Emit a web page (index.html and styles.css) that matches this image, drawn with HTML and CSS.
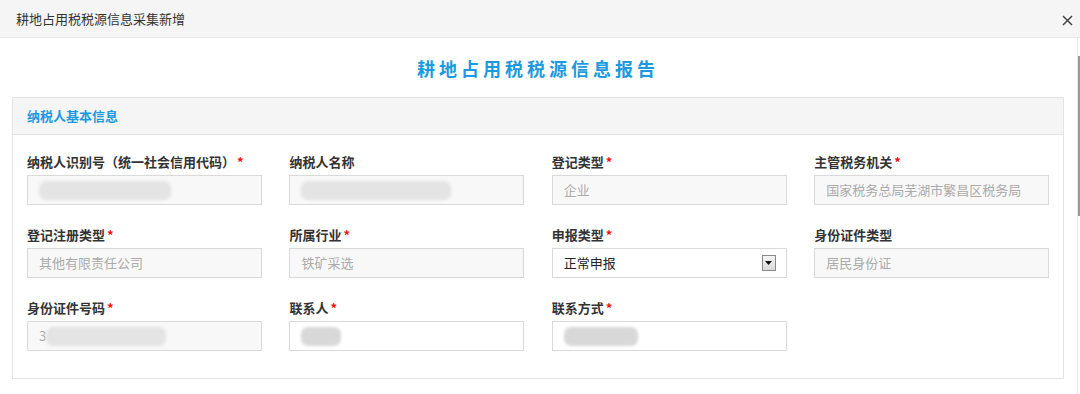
FILE: index.html
```html
<!DOCTYPE html>
<html lang="zh-CN">
<head>
  <meta charset="UTF-8" />
  <title>耕地占用税税源信息采集新增</title>
  <link rel="stylesheet" href="styles.css">
</head>
<body>

  <div class="dialog-head">
    <span class="dialog-title">耕地占用税税源信息采集新增</span>
    <span class="dialog-close">
      <svg width="11" height="11" viewBox="0 0 11 11"><path d="M1 1 L10 10 M10 1 L1 10" stroke="#444" stroke-width="1.5" fill="none"/></svg>
    </span>
  </div>

  <div class="dialog-body">
    <div class="content">
      <h2 class="report-title">耕地占用税税源信息报告</h2>

      <div class="panel">
        <div class="panel-head">纳税人基本信息</div>
        <div class="panel-body">

          <!-- row 1 -->
          <div class="form-group">
            <label>纳税人识别号（统一社会信用代码）<i class="req">*</i></label>
            <div class="field readonly"><span class="blob" style="width:132px"></span></div>
          </div>
          <div class="form-group">
            <label>纳税人名称</label>
            <div class="field readonly"><span class="blob" style="width:150px"></span></div>
          </div>
          <div class="form-group">
            <label>登记类型<i class="req">*</i></label>
            <div class="field readonly">企业</div>
          </div>
          <div class="form-group">
            <label>主管税务机关<i class="req">*</i></label>
            <div class="field readonly">国家税务总局芜湖市繁昌区税务局</div>
          </div>

          <!-- row 2 -->
          <div class="form-group">
            <label>登记注册类型<i class="req">*</i></label>
            <div class="field readonly">其他有限责任公司</div>
          </div>
          <div class="form-group">
            <label>所属行业<i class="req">*</i></label>
            <div class="field readonly">铁矿采选</div>
          </div>
          <div class="form-group">
            <label>申报类型<i class="req">*</i></label>
            <div class="field select">
              <span class="value">正常申报</span>
              <span class="arrow"><svg width="7" height="4" viewBox="0 0 7 4"><path d="M0 0 H7 L3.5 4 Z" fill="#111"/></svg></span>
            </div>
          </div>
          <div class="form-group">
            <label>身份证件类型</label>
            <div class="field readonly">居民身份证</div>
          </div>

          <!-- row 3 -->
          <div class="form-group">
            <label>身份证件号码<i class="req">*</i></label>
            <div class="field readonly">3<span class="blob" style="width:120px"></span></div>
          </div>
          <div class="form-group">
            <label>联系人<i class="req">*</i></label>
            <div class="field"><span class="blob dark" style="width:40px"></span></div>
          </div>
          <div class="form-group">
            <label>联系方式<i class="req">*</i></label>
            <div class="field"><span class="blob dark" style="width:74px"></span></div>
          </div>

        </div>
      </div>
    </div>
    <div class="scrollbar"><div class="thumb"></div></div>
  </div>

</body>
</html>
```

FILE: styles.css
```css
:root {
  --blue: #1b9ae0;
  --border: #d9d9d9;
  --text: #333333;
}

body {
  margin: 0;
  padding: 0;
  font-family: "Noto Sans CJK SC", "Noto Sans", sans-serif;
  color: var(--text);
  background: #ffffff;
}

.dialog-head {
  height: 37px;
  background: #f5f5f5;
  border-bottom: 1px solid #e8e8e8;
  display: flex;
  align-items: center;
  justify-content: space-between;
  padding: 0 7px 0 16px;
}

.dialog-title {
  font-size: 13px;
  color: #333;
}

.dialog-close {
  display: flex;
  margin-top: 3px;
}

.dialog-body {
  display: flex;
  height: 356px;
}

.content {
  flex: 1;
  padding: 0 13px 0 12px;
  border-right: 1px solid #e6e6e6;
}

.scrollbar {
  width: 2px;
  padding-top: 18px;
}

.scrollbar .thumb {
  height: 160px;
  background: #9a9a9a;
}

.report-title {
  margin: 0;
  padding: 20px 0 19px;
  text-align: center;
  font-size: 18px;
  line-height: 20px;
  font-weight: bold;
  letter-spacing: 4px;
  color: var(--blue);
}

.panel {
  border: 1px solid #e3e3e3;
}

.panel-head {
  height: 36px;
  line-height: 36px;
  padding-left: 14px;
  background: #f5f5f5;
  border-bottom: 1px solid #e3e3e3;
  font-size: 13px;
  font-weight: bold;
  color: var(--blue);
}

.panel-body {
  display: grid;
  grid-template-columns: repeat(4, 235px);
  column-gap: 27.4px;
  row-gap: 21px;
  padding: 18px 0 27px 14px;
}

.form-group label {
  display: block;
  font-size: 13px;
  line-height: 18px;
  font-weight: bold;
  color: #333;
  margin-bottom: 4px;
  white-space: nowrap;
}

.req {
  font-style: normal;
  color: #f01010;
  margin-left: 2px;
}

.field {
  box-sizing: border-box;
  height: 30px;
  border: 1px solid var(--border);
  background: #ffffff;
  padding-left: 11px;
  font-size: 13px;
  line-height: 28px;
  color: #333;
  display: flex;
  align-items: center;
  white-space: nowrap;
  overflow: hidden;
}

.field.readonly {
  background: #f8f8f8;
  color: #aaaaaa;
}

.field.select {
  justify-content: space-between;
  padding-right: 10px;
}

.field.select .value {
  color: #222;
}

.arrow {
  box-sizing: border-box;
  width: 14px;
  height: 16px;
  border: 1px solid #8a8a8a;
  background: linear-gradient(#f4f4f4, #dadada);
  display: flex;
  align-items: center;
  justify-content: center;
}

.blob {
  display: inline-block;
  height: 19px;
  border-radius: 7px;
  background: #e4e4e4;
  filter: blur(1.5px);
}

.blob.dark {
  background: #d8d8d8;
}
```
